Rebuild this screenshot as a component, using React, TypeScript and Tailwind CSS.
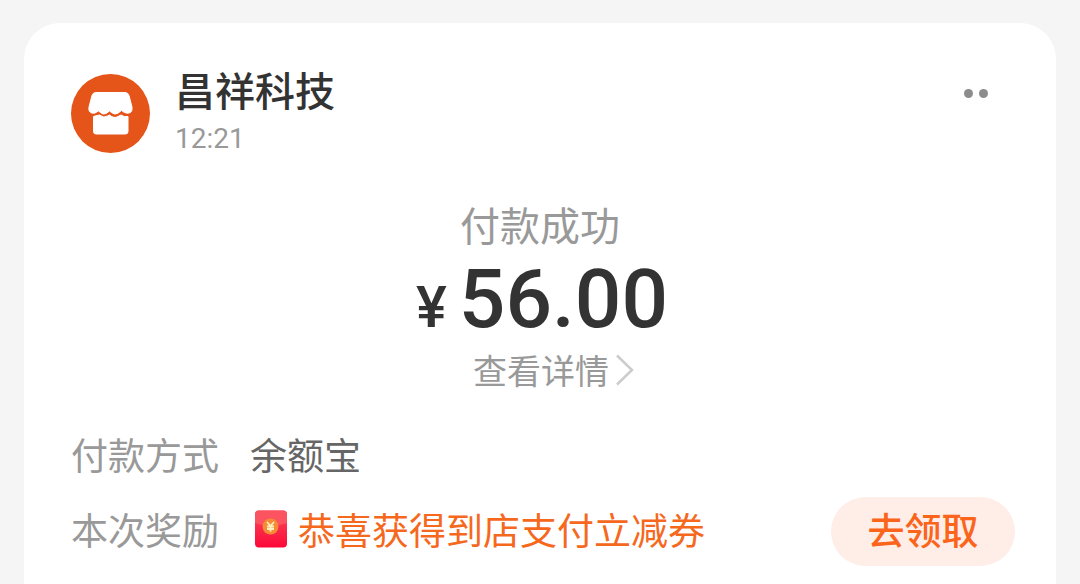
import type { ReactNode } from "react"

function StoreAvatar() {
  return (
    <svg viewBox="0 0 80 80" className="size-20 shrink-0" aria-hidden="true">
      <circle cx="39.5" cy="40.5" r="39.5" fill="#e55419" />
      <path
        d="M25 19.500H54Q57 19.500 58 22.500L61 34Q61.500 38 59.500 39.500Q56.500 41 53.500 39.500L50.500 37.500L46.500 40.500Q43.500 42 40.500 39.500L38.500 38L35 40.500Q32 42 29.500 39.500L27.500 38L24 40Q20.500 41 18.500 38.500Q17.500 37 18 34L21 22.500Q22 19.500 25 19.500Z"
        fill="#fff"
        stroke="#fff"
        strokeWidth="1"
        strokeLinejoin="round"
      />
      <path
        d="M22.500 43.500L26 42.500L28.500 42Q33 45.500 36.500 43L38.500 42Q43 46 47 43.500L50 42Q53.500 44.500 57 43.500V58.500Q57 61 54.500 61H25Q22.500 61 22.500 58.500Z"
        fill="#fff"
        stroke="#fff"
        strokeWidth="1"
        strokeLinejoin="round"
      />
    </svg>
  )
}

function RedPacket() {
  return (
    <svg viewBox="0 0 34 38" className="h-[38px] w-[34px] shrink-0" aria-hidden="true">
      <defs>
        <linearGradient id="packet" x1="0" y1="0" x2="0" y2="1">
          <stop offset="0" stopColor="#fa4c5c" />
          <stop offset="1" stopColor="#fc0738" />
        </linearGradient>
      </defs>
      <rect x="1" y="0.5" width="32" height="37" rx="4" fill="url(#packet)" />
      <path d="M1 13V4.500Q1 .5 5 .5H29Q33 .5 33 4.500V13Q17 19 1 13Z" fill="#fb5360" />
      <circle cx="16.500" cy="16.500" r="8" fill="#f68a35" />
      <path
        d="M13 12L16.500 16L20 12M16.500 16V21.500M13 16.500H20M13 19H20"
        fill="none"
        stroke="#fff0bd"
        strokeWidth="1.800"
      />
    </svg>
  )
}

function DetailRow({ label, children }: { label: string; children: ReactNode }) {
  return (
    <div className="flex items-center gap-[31px]">
      <dt className="shrink-0 pb-1.5 text-[#999999]">{label}</dt>
      <dd className="flex grow items-center">{children}</dd>
    </div>
  )
}

export default function App() {
  return (
    <main className="flex min-h-screen flex-col bg-[#f5f5f5] px-6 pt-[23px] font-['Noto_Sans_CJK_SC',sans-serif]">
      <article className="grow rounded-t-[36px] bg-white pt-11 pr-[41px] pb-[18px] pl-[47px]">
        <header className="flex items-end gap-6">
          <StoreAvatar />
          <div className="grow">
            <h1 className="text-[40px] leading-[44px] font-medium text-[#333333]">昌祥科技</h1>
            <time className="mt-3.5 block font-[Roboto,sans-serif] text-[28px] leading-7 text-[#999999]">12:21</time>
          </div>
          <button type="button" aria-label="更多" className="mr-[27px] flex gap-1.5 self-start py-[22px]">
            <span className="size-[9px] rounded-full bg-[#8c8c8c]" />
            <span className="size-[9px] rounded-full bg-[#8c8c8c]" />
          </button>
        </header>

        <section className="mt-[47px] flex flex-col items-center pr-1.5">
          <p className="text-[40px] leading-[48px] text-[#999999]">付款成功</p>
          <p className="mt-[3px] ml-1 flex items-baseline gap-3 font-[Roboto,sans-serif] font-medium text-[#333333]">
            <span className="text-[58px] leading-[58px]">¥</span>
            <span className="text-[82px] leading-[96px]">56.00</span>
          </p>
          <a href="#detail" className="ml-7 flex items-center gap-1.5 text-[34px] leading-[46px] text-[#999999]">
            查看详情
            <svg viewBox="0 0 20 32" className="h-8 w-5" fill="none" stroke="#cccccc" strokeWidth="2.500" aria-hidden="true">
              <path d="M2 1.500L17 16L2 30.500" />
            </svg>
          </a>
        </section>

        <dl className="mt-[37px] flex flex-col gap-[13px] text-[37px] leading-[48px]">
          <DetailRow label="付款方式">
            <span className="pb-1.5 text-[#666666]">余额宝</span>
          </DetailRow>
          <DetailRow label="本次奖励">
            <span className="ml-1 flex items-center gap-2.5 pb-1.5 text-[#f5681d]">
              <RedPacket />
              恭喜获得到店支付立减券
            </span>
            <button
              type="button"
              className="ml-auto h-[69px] w-[184px] rounded-full bg-[#ffeee8] pb-1.5 font-medium text-[#fb641b]"
            >
              去领取
            </button>
          </DetailRow>
        </dl>
      </article>
    </main>
  )
}
